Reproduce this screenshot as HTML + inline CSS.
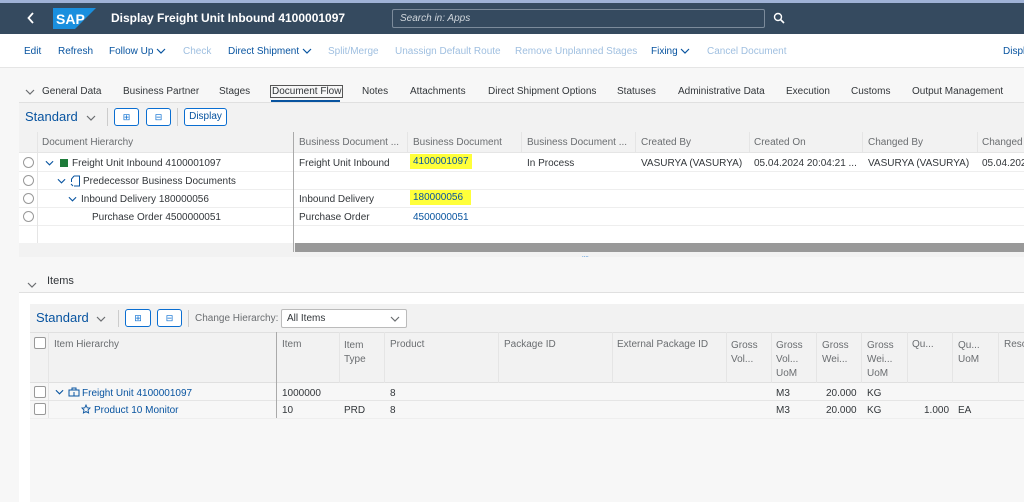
<!DOCTYPE html>
<html><head><style>
*{margin:0;padding:0;box-sizing:border-box}
body{width:1024px;height:502px;overflow:hidden;background:#f7f7f7;font-family:"Liberation Sans",sans-serif;font-size:10px;color:#32363a;position:relative}
.a{position:absolute;white-space:nowrap}
.dis{color:#9fbfe0}
.hdr{color:#6a6d70}
.blue{color:#0854a0}
.hl{background:#ffff3a;padding:2px 3px}
.cv{display:inline-block;vertical-align:middle}
</style></head><body>
<svg width="0" height="0" style="position:absolute"><defs><symbol id="dn" viewBox="0 0 10 6"><path d="M1 1 L5 5 L9 1" fill="none" stroke="currentColor" stroke-width="1.2"/></symbol></defs></svg>
<div class="a" style="left:0;top:0;width:1024px;height:3px;background:#9fb2d6"></div>
<div class="a" style="left:0;top:3px;width:1024px;height:31px;background:#354a5f"></div>
<svg class="a" style="left:27px;top:12px" width="8" height="12"><path d="M6 1 L1.5 6 L6 11" fill="none" stroke="#fff" stroke-width="1.8"/></svg>
<svg class="a" style="left:53px;top:8px" width="43" height="21"><polygon points="0,0 43,0 22,21 0,21" fill="#1a8fde"/><text x="3" y="16" fill="#fff" font-size="14" font-weight="bold" font-family="Liberation Sans">SAP</text></svg>
<div class="a" style="left:111px;top:11px;color:#fff;font-size:12px;font-weight:bold">Display Freight Unit Inbound 4100001097</div>
<div class="a" style="left:392px;top:9px;width:373px;height:19px;border:1px solid #7c8b9b;border-radius:2px"></div>
<div class="a" style="left:400px;top:13px;color:#d0d6dc;font-style:italic;font-size:10px">Search in: Apps</div>
<svg class="a" style="left:773px;top:12px" width="12" height="12"><circle cx="5" cy="5" r="3.5" fill="none" stroke="#fff" stroke-width="1.4"/><path d="M7.5 7.5 L11 11" stroke="#fff" stroke-width="1.6"/></svg>
<div class="a" style="left:0;top:34px;width:1024px;height:34px;background:#fff;border-bottom:1px solid #e5e5e5"></div>
<div class="a blue" style="top:46px;left:24px">Edit</div>
<div class="a blue" style="top:46px;left:58px">Refresh</div>
<div class="a blue" style="top:46px;left:109px">Follow Up <svg class="cv" width="10" height="6"><use href="#dn"/></svg></div>
<div class="a dis" style="top:46px;left:183px">Check</div>
<div class="a blue" style="top:46px;left:228px">Direct Shipment <svg class="cv" width="10" height="6"><use href="#dn"/></svg></div>
<div class="a dis" style="top:46px;left:328px">Split/Merge</div>
<div class="a dis" style="top:46px;left:395px">Unassign Default Route</div>
<div class="a dis" style="top:46px;left:515px">Remove Unplanned Stages</div>
<div class="a blue" style="top:46px;left:651px">Fixing <svg class="cv" width="10" height="6"><use href="#dn"/></svg></div>
<div class="a dis" style="top:46px;left:707px">Cancel Document</div>
<div class="a blue" style="top:46px;left:1003px">Displ</div>
<div class="a" style="left:19px;top:102px;width:1005px;height:1px;background:#e0e0e0"></div>
<svg class="a" style="left:25px;top:89px;color:#6a6d70" width="10" height="6"><use href="#dn"/></svg>
<div class="a" style="top:86px;left:42px">General Data</div>
<div class="a" style="top:86px;left:123px">Business Partner</div>
<div class="a" style="top:86px;left:219px">Stages</div>
<div class="a" style="top:85px;left:270px;border:1px solid #555;padding:0 1px">Document Flow</div>
<div class="a" style="top:100px;left:271px;width:69px;height:2px;background:#0854a0"></div>
<div class="a" style="top:86px;left:362px">Notes</div>
<div class="a" style="top:86px;left:410px">Attachments</div>
<div class="a" style="top:86px;left:488px">Direct Shipment Options</div>
<div class="a" style="top:86px;left:617px">Statuses</div>
<div class="a" style="top:86px;left:678px">Administrative Data</div>
<div class="a" style="top:86px;left:786px">Execution</div>
<div class="a" style="top:86px;left:851px">Customs</div>
<div class="a" style="top:86px;left:912px">Output Management</div>
<div class="a" style="left:19px;top:103px;width:1005px;height:29px;background:#f2f2f2"></div>
<div class="a blue" style="top:109px;left:25px;font-size:13px">Standard</div>
<svg class="a" style="left:86px;top:115px;color:#6a6d70" width="10" height="6"><use href="#dn"/></svg>
<div class="a" style="left:107px;top:108px;width:1px;height:18px;background:#ccc"></div>
<div class="a" style="left:114px;top:108px;width:25px;height:18px;border:1px solid #0a6ed1;border-radius:3px;background:#fff;color:#0a6ed1;text-align:center;font-size:9px;line-height:16px">⊞</div>
<div class="a" style="left:146px;top:108px;width:25px;height:18px;border:1px solid #0a6ed1;border-radius:3px;background:#fff;color:#0a6ed1;text-align:center;font-size:9px;line-height:16px">⊟</div>
<div class="a" style="left:177px;top:108px;width:1px;height:18px;background:#ccc"></div>
<div class="a" style="left:184px;top:108px;width:43px;height:18px;border:1px solid #0a6ed1;border-radius:3px;background:#fff;color:#0854a0;text-align:center;line-height:16px">Display</div>
<div class="a" style="left:19px;top:132px;width:1005px;height:21px;background:#f2f2f2;border-bottom:1px solid #e5e5e5"></div>
<div class="a" style="left:19px;top:153px;width:1005px;height:90px;background:#fff"></div>
<div class="a" style="left:19px;top:171px;width:1005px;height:1px;background:#eee"></div>
<div class="a" style="left:19px;top:189px;width:1005px;height:1px;background:#eee"></div>
<div class="a" style="left:19px;top:207px;width:1005px;height:1px;background:#eee"></div>
<div class="a" style="left:19px;top:225px;width:1005px;height:1px;background:#eee"></div>
<div class="a" style="left:19px;top:243px;width:1005px;height:14px;background:#f2f2f2"></div>
<div class="a" style="left:295px;top:243px;width:729px;height:9px;background:#999"></div>
<div class="a" style="left:582px;top:253px;color:#0a6ed1;font-size:6px">....</div>
<div class="a" style="left:37px;top:132px;width:1px;height:111px;background:#e5e5e5"></div>
<div class="a" style="left:293px;top:132px;width:1px;height:120px;background:#aaa"></div>
<div class="a" style="left:407px;top:132px;width:1px;height:21px;background:#e5e5e5"></div>
<div class="a" style="left:521px;top:132px;width:1px;height:21px;background:#e5e5e5"></div>
<div class="a" style="left:635px;top:132px;width:1px;height:21px;background:#e5e5e5"></div>
<div class="a" style="left:749px;top:132px;width:1px;height:21px;background:#e5e5e5"></div>
<div class="a" style="left:862px;top:132px;width:1px;height:21px;background:#e5e5e5"></div>
<div class="a" style="left:977px;top:132px;width:1px;height:21px;background:#e5e5e5"></div>
<div class="a hdr" style="top:137px;left:42px">Document Hierarchy</div>
<div class="a hdr" style="top:137px;left:299px">Business Document ...</div>
<div class="a hdr" style="top:137px;left:413px">Business Document</div>
<div class="a hdr" style="top:137px;left:527px">Business Document ...</div>
<div class="a hdr" style="top:137px;left:641px">Created By</div>
<div class="a hdr" style="top:137px;left:754px">Created On</div>
<div class="a hdr" style="top:137px;left:868px">Changed By</div>
<div class="a hdr" style="top:137px;left:982px">Changed</div>
<div class="a" style="left:23px;top:157px;width:11px;height:11px;border:1px solid #999;border-radius:50%"></div>
<div class="a" style="left:23px;top:175px;width:11px;height:11px;border:1px solid #999;border-radius:50%"></div>
<div class="a" style="left:23px;top:193px;width:11px;height:11px;border:1px solid #999;border-radius:50%"></div>
<div class="a" style="left:23px;top:211px;width:11px;height:11px;border:1px solid #999;border-radius:50%"></div>
<svg class="a" style="left:45px;top:160px;color:#0854a0" width="9" height="6"><use href="#dn"/></svg>
<div class="a" style="left:60px;top:159px;width:8px;height:8px;background:#1e7b3a"></div>
<div class="a" style="top:158px;left:72px">Freight Unit Inbound 4100001097</div>
<svg class="a" style="left:57px;top:178px;color:#0854a0" width="9" height="6"><use href="#dn"/></svg>
<svg class="a" style="left:70px;top:175px" width="11" height="12"><path d="M4 1 H9.5 V11 H4 M4 1 L1.5 4 V7 M1 9 L3 11" fill="none" stroke="#0854a0" stroke-width="1"/></svg>
<div class="a" style="top:176px;left:83px">Predecessor Business Documents</div>
<svg class="a" style="left:68px;top:196px;color:#0854a0" width="9" height="6"><use href="#dn"/></svg>
<div class="a" style="top:194px;left:81px">Inbound Delivery 180000056</div>
<div class="a" style="top:212px;left:92px">Purchase Order 4500000051</div>
<div class="a" style="top:158px;left:299px">Freight Unit Inbound</div>
<div class="a" style="top:194px;left:299px">Inbound Delivery</div>
<div class="a" style="top:212px;left:299px">Purchase Order</div>
<div class="a" style="top:156px;left:410px"><span class="hl blue">4100001097</span></div>
<div class="a" style="top:192px;left:410px"><span class="hl blue" style="padding-right:8px">180000056</span></div>
<div class="a blue" style="top:212px;left:413px">4500000051</div>
<div class="a" style="top:158px;left:527px">In Process</div>
<div class="a" style="top:158px;left:641px">VASURYA (VASURYA)</div>
<div class="a" style="top:158px;left:754px">05.04.2024 20:04:21 ...</div>
<div class="a" style="top:158px;left:868px">VASURYA (VASURYA)</div>
<div class="a" style="top:158px;left:982px">05.04.202</div>
<svg class="a" style="left:27px;top:282px;color:#6a6d70" width="10" height="6"><use href="#dn"/></svg>
<div class="a" style="top:275px;left:47px;font-size:11px">Items</div>
<div class="a" style="left:19px;top:292px;width:1005px;height:210px;background:#fff;border-top:1px solid #e0e0e0"></div>
<div class="a" style="left:30px;top:304px;width:994px;height:198px;background:#f7f7f7"></div>
<div class="a" style="left:30px;top:304px;width:994px;height:28px;background:#f2f2f2"></div>
<div class="a blue" style="top:310px;left:36px;font-size:13px">Standard</div>
<svg class="a" style="left:96px;top:316px;color:#6a6d70" width="10" height="6"><use href="#dn"/></svg>
<div class="a" style="left:118px;top:310px;width:1px;height:17px;background:#ccc"></div>
<div class="a" style="left:125px;top:309px;width:26px;height:18px;border:1px solid #0a6ed1;border-radius:3px;background:#fff;color:#0a6ed1;text-align:center;font-size:9px;line-height:16px">⊞</div>
<div class="a" style="left:157px;top:309px;width:25px;height:18px;border:1px solid #0a6ed1;border-radius:3px;background:#fff;color:#0a6ed1;text-align:center;font-size:9px;line-height:16px">⊟</div>
<div class="a" style="left:188px;top:310px;width:1px;height:17px;background:#ccc"></div>
<div class="a hdr" style="top:313px;left:195px">Change Hierarchy:</div>
<div class="a" style="left:281px;top:309px;width:126px;height:19px;border:1px solid #bbb;border-radius:2px;background:#fff"></div>
<div class="a" style="top:313px;left:287px">All Items</div>
<svg class="a" style="left:390px;top:316px;color:#6a6d70" width="10" height="6"><use href="#dn"/></svg>
<div class="a" style="left:30px;top:332px;width:994px;height:51px;background:#f2f2f2;border-top:1px solid #e0e0e0;border-bottom:1px solid #e0e0e0"></div>
<div class="a" style="left:30px;top:400px;width:994px;height:1px;background:#e5e5e5"></div>
<div class="a" style="left:30px;top:418px;width:994px;height:1px;background:#eee"></div>
<div class="a" style="left:48px;top:332px;width:1px;height:86px;background:#e5e5e5"></div>
<div class="a" style="left:276px;top:332px;width:1px;height:86px;background:#aaa"></div>
<div class="a" style="left:339px;top:332px;width:1px;height:51px;background:#e5e5e5"></div>
<div class="a" style="left:384px;top:332px;width:1px;height:51px;background:#e5e5e5"></div>
<div class="a" style="left:498px;top:332px;width:1px;height:51px;background:#e5e5e5"></div>
<div class="a" style="left:612px;top:332px;width:1px;height:51px;background:#e5e5e5"></div>
<div class="a" style="left:726px;top:332px;width:1px;height:51px;background:#e5e5e5"></div>
<div class="a" style="left:771px;top:332px;width:1px;height:51px;background:#e5e5e5"></div>
<div class="a" style="left:816px;top:332px;width:1px;height:51px;background:#e5e5e5"></div>
<div class="a" style="left:861px;top:332px;width:1px;height:51px;background:#e5e5e5"></div>
<div class="a" style="left:907px;top:332px;width:1px;height:51px;background:#e5e5e5"></div>
<div class="a" style="left:952px;top:332px;width:1px;height:51px;background:#e5e5e5"></div>
<div class="a" style="left:998px;top:332px;width:1px;height:51px;background:#e5e5e5"></div>
<div class="a" style="left:34px;top:337px;width:12px;height:12px;border:1px solid #999;border-radius:2px;background:#fff"></div>
<div class="a" style="left:34px;top:386px;width:12px;height:12px;border:1px solid #999;border-radius:2px;background:#fff"></div>
<div class="a" style="left:34px;top:403px;width:12px;height:12px;border:1px solid #999;border-radius:2px;background:#fff"></div>
<div class="a hdr" style="top:339px;left:54px">Item Hierarchy</div>
<div class="a hdr" style="top:339px;left:282px">Item</div>
<div class="a hdr" style="top:339px;left:344px;line-height:14px">Item<br>Type</div>
<div class="a hdr" style="top:339px;left:390px">Product</div>
<div class="a hdr" style="top:339px;left:504px">Package ID</div>
<div class="a hdr" style="top:339px;left:617px">External Package ID</div>
<div class="a hdr" style="top:339px;left:731px;line-height:14px">Gross<br>Vol...</div>
<div class="a hdr" style="top:339px;left:776px;line-height:14px">Gross<br>Vol...<br>UoM</div>
<div class="a hdr" style="top:339px;left:822px;line-height:14px">Gross<br>Wei...</div>
<div class="a hdr" style="top:339px;left:867px;line-height:14px">Gross<br>Wei...<br>UoM</div>
<div class="a hdr" style="top:339px;left:912px">Qu...</div>
<div class="a hdr" style="top:339px;left:958px;line-height:14px">Qu...<br>UoM</div>
<div class="a hdr" style="top:339px;left:1004px">Reso</div>
<svg class="a" style="left:55px;top:389px;color:#0854a0" width="9" height="6"><use href="#dn"/></svg>
<svg class="a" style="left:68px;top:387px" width="12" height="10"><rect x="1" y="3" width="10" height="6" fill="none" stroke="#0854a0"/><path d="M4 3 V1 H8 V3 M6 5 V9" fill="none" stroke="#0854a0"/></svg>
<div class="a blue" style="top:388px;left:82px">Freight Unit 4100001097</div>
<svg class="a" style="left:81px;top:404px" width="10" height="10"><path d="M5 1 L6.2 3.8 L9 4 L7 6 L7.6 9 L5 7.5 L2.4 9 L3 6 L1 4 L3.8 3.8 Z" fill="none" stroke="#0854a0" stroke-width="0.9"/></svg>
<div class="a blue" style="top:405px;left:94px">Product 10 Monitor</div>
<div class="a" style="top:388px;left:282px">1000000</div>
<div class="a" style="top:388px;left:390px">8</div>
<div class="a" style="top:388px;left:776px">M3</div>
<div class="a" style="top:388px;left:826px">20.000</div>
<div class="a" style="top:388px;left:867px">KG</div>
<div class="a" style="top:405px;left:282px">10</div>
<div class="a" style="top:405px;left:344px">PRD</div>
<div class="a" style="top:405px;left:390px">8</div>
<div class="a" style="top:405px;left:776px">M3</div>
<div class="a" style="top:405px;left:826px">20.000</div>
<div class="a" style="top:405px;left:867px">KG</div>
<div class="a" style="top:405px;left:924px">1.000</div>
<div class="a" style="top:405px;left:958px">EA</div>
</body></html>
